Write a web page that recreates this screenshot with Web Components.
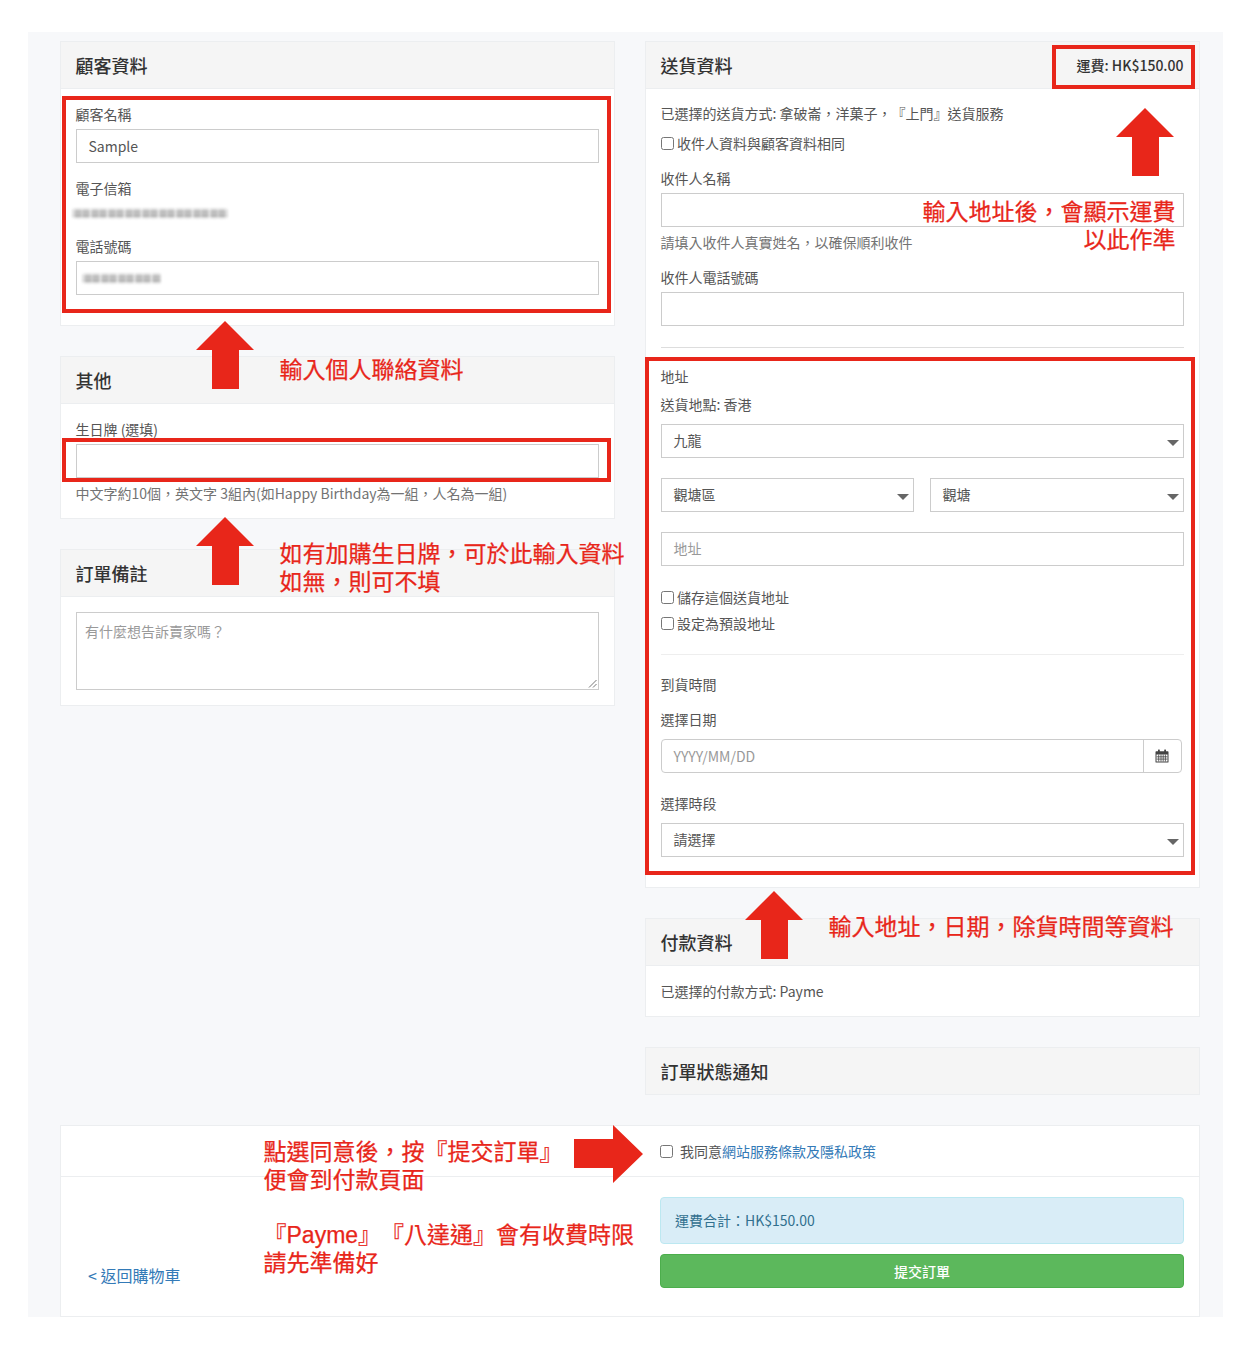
<!DOCTYPE html>
<html lang="zh-Hant">
<head>
<meta charset="utf-8">
<title>結帳</title>
<style>
  html, body { margin: 0; background: #fff; }
  body { font: 14px/20px "Noto Sans CJK TC", "Noto Sans", sans-serif; color: #555; padding: 32px 27px 0 28px; height: 1318px; box-sizing: border-box; overflow: hidden; text-spacing-trim: space-all; }
  .mt4{margin-top:4px}.mt6{margin-top:6px}.mt8{margin-top:8px}.mt9{margin-top:9px}.mt10{margin-top:10px}.mt14{margin-top:14px}.mt15{margin-top:15px}.mt16{margin-top:16px}.mt19{margin-top:19px}.mt20{margin-top:20px}.mt21{margin-top:21px}.mt22{margin-top:22px}.mt30{margin-top:30px}
  .last15{margin-bottom:15px}
  .two{display:grid;grid-template-columns:253px 254px;column-gap:16px}
</style>
</head>
<body>
<checkout-page>
  <div slot="left">
    <x-panel heading="顧客資料">
      <x-label class="mt16">顧客名稱</x-label>
      <x-input class="mt4">Sample</x-input>
      <x-label class="mt16">電子信箱</x-label>
      <x-redacted class="mt4" width="156" shift="-4"></x-redacted>
      <x-label class="mt14">電話號碼</x-label>
      <x-input class="mt4"><x-redacted width="79" shift="-7"></x-redacted></x-input>
      <div class="last15"></div>
    </x-panel>
    <x-panel heading="其他" class="mt30" style="--pb:14px">
      <x-label class="mt16">生日牌 (選填)</x-label>
      <x-input class="mt4"></x-input>
      <x-hint class="mt6">中文字約10個，英文字 3組內(如Happy Birthday為一組，人名為一組)</x-hint>
    </x-panel>
    <x-panel heading="訂單備註" class="mt30">
      <x-textarea class="mt15">有什麼想告訴賣家嗎？</x-textarea>
    </x-panel>
  </div>
  <div slot="right">
    <x-panel heading="送貨資料">
      <x-label slot="extra" strong>運費: HK$150.00</x-label>
      <x-label class="mt15">已選擇的送貨方式: 拿破崙，洋菓子，『上門』送貨服務</x-label>
      <x-check class="mt10">收件人資料與顧客資料相同</x-check>
      <x-label class="mt15">收件人名稱</x-label>
      <x-input class="mt4"></x-input>
      <x-hint class="mt6">請填入收件人真實姓名，以確保順利收件</x-hint>
      <x-label class="mt15">收件人電話號碼</x-label>
      <x-input class="mt4"></x-input>
      <x-rule class="mt21" tone="#ddd"></x-rule>
      <x-label class="mt19">地址</x-label>
      <x-label class="mt8">送貨地點: 香港</x-label>
      <x-select class="mt9">九龍</x-select>
      <div class="two mt20">
        <x-select>觀塘區</x-select>
        <x-select>觀塘</x-select>
      </div>
      <x-input class="mt20" placeholder>地址</x-input>
      <x-check class="mt22">儲存這個送貨地址</x-check>
      <x-check class="mt6">設定為預設地址</x-check>
      <x-rule class="mt20" tone="#eee"></x-rule>
      <x-label class="mt20">到貨時間</x-label>
      <x-label class="mt15">選擇日期</x-label>
      <x-date class="mt9">YYYY/MM/DD</x-date>
      <x-label class="mt21">選擇時段</x-label>
      <x-select class="mt9">請選擇</x-select>
      <div class="last15"></div>
    </x-panel>
    <x-panel heading="付款資料" class="mt30" style="--pb:14px">
      <x-label class="mt16">已選擇的付款方式: Payme</x-label>
    </x-panel>
    <x-panel heading="訂單狀態通知" class="mt30" bare></x-panel>
  </div>
  <x-submit slot="bottom"></x-submit>
</checkout-page>

<x-frame style="left:62px;top:96px;width:549px;height:217px"></x-frame>
<x-frame style="left:62px;top:438px;width:549px;height:44px"></x-frame>
<x-frame style="left:1052px;top:45px;width:143px;height:44px"></x-frame>
<x-frame style="left:645px;top:357px;width:550px;height:518px"></x-frame>

<x-arrow style="left:196px;top:321px"></x-arrow>
<x-arrow style="left:196px;top:517px"></x-arrow>
<x-arrow style="left:1116px;top:108px"></x-arrow>
<x-arrow style="left:745px;top:891px"></x-arrow>
<x-arrow dir="right" style="left:574px;top:1125px"></x-arrow>

<x-note style="left:279.500px;top:356px">輸入個人聯絡資料</x-note>
<x-note style="left:279.500px;top:540px">如有加購生日牌，可於此輸入資料<br>如無，則可不填</x-note>
<x-note style="right:74.500px;top:198px;text-align:right">輸入地址後，會顯示運費<br>以此作準</x-note>
<x-note style="left:828.500px;top:913px">輸入地址，日期，除貨時間等資料</x-note>
<x-note style="left:263.500px;top:1138px">點選同意後，按『提交訂單』<br>便會到付款頁面</x-note>
<x-note style="left:263.500px;top:1221px">『Payme』『八達通』會有收費時限<br>請先準備好</x-note>

<script>
function def(name, css, html, init) {
  customElements.define(name, class extends HTMLElement {
    constructor() {
      super();
      const r = this.attachShadow({ mode: 'open' });
      r.innerHTML = '<style>' + css + '</style>' + html;
    }
    connectedCallback() { if (init) init(this, this.shadowRoot); }
  });
}
const box = 'box-sizing:border-box;background:#fff;border:1px solid #ccc;';

def('checkout-page',
  `:host{display:block;background:#f7f8fa;height:1285px;overflow:hidden;padding:9px 23px 0 32px;box-sizing:border-box}
   .cols{display:grid;grid-template-columns:555px 555px;column-gap:30px;height:1084px}`,
  `<div class="cols"><slot name="left"></slot><slot name="right"></slot></div><slot name="bottom"></slot>`);

def('x-panel',
  `:host{display:block;background:#fff;border:1px solid #eceef0;box-sizing:border-box}
   header{height:46px;background:#f5f5f5;border-bottom:1px solid #eceef0;display:flex;align-items:center;justify-content:space-between;padding:0 14.5px;box-sizing:content-box}
   h3{margin:0;font:500 18px/24px "Noto Sans CJK TC",sans-serif;color:#333}
   .extra{font-weight:500;color:#333;padding-right:1px}
   main{padding:0 15px var(--pb,15px);display:flow-root}
   :host([bare]) main{display:none}
   :host([bare]) header{border-bottom:0;height:46px}`,
  `<header><h3></h3><div class="extra"><slot name="extra"></slot></div></header><main><slot></slot></main>`,
  (h, r) => { r.querySelector('h3').textContent = h.getAttribute('heading'); });

def('x-label',
  `:host{display:block;height:20px;line-height:18px;color:#555;white-space:nowrap;margin-left:-.5px}
   :host([strong]){color:#333;font-weight:500;line-height:20px;margin-left:0}`, `<slot></slot>`);

def('x-hint', `:host{display:block;height:20px;line-height:18px;color:#737373;white-space:nowrap;margin-left:-.5px}`, `<slot></slot>`);

def('x-input',
  `:host{display:flex;align-items:center;height:34px;${box}padding:0 11.5px;color:#555;white-space:nowrap}
   :host([placeholder]){color:#999;padding-bottom:2px}`, `<slot></slot>`);

def('x-redacted',
  `:host{display:block;height:20px;width:100%;position:relative}
   i{position:absolute;top:5px;height:11px;background:repeating-linear-gradient(90deg,rgba(255,255,255,.5) 0 3px,rgba(255,255,255,0) 3px 9px,rgba(255,255,255,.3) 9px 11px,rgba(255,255,255,0) 11px 17px),linear-gradient(180deg,#eee 0,#cfcfcf 18%,#a8a8a8 38%,#c8c8c8 52%,#a0a0a0 68%,#dcdcdc 88%,#f3f3f3 100%);filter:blur(1px);opacity:.9}`,
  `<i></i>`,
  (h, r) => { const i = r.querySelector('i'); i.style.width = h.getAttribute('width') + 'px'; i.style.left = h.getAttribute('shift') + 'px'; });

def('x-textarea',
  `:host{display:block;position:relative;height:78px;${box}padding:8px 8px;color:#999;line-height:20px}
   svg{position:absolute;right:1px;bottom:1px}`,
  `<slot></slot><svg width="9" height="9" viewBox="0 0 9 9"><path d="M1 8.500 8.500 1M5 8.500 8.500 5" stroke="#777" fill="none"/></svg>`);

def('x-select',
  `:host{display:flex;align-items:center;position:relative;height:34px;${box}padding:0 11.5px 2px;color:#555;white-space:nowrap}
   svg{position:absolute;right:4px;top:15px}`,
  `<slot></slot><svg width="12" height="6" viewBox="0 0 12 6"><path d="M0 0h12L6 6z" fill="#666"/></svg>`);

def('x-check',
  `:host{display:flex;align-items:center;height:20px;color:#555;white-space:nowrap}
   input{margin:0 3px 2px 0;width:13px;height:13px}
   span{line-height:18px;height:20px}`,
  `<input type="checkbox"><span><slot></slot></span>`);

def('x-rule', `:host{display:block;height:1px}`, ``, (h) => { h.style.background = h.getAttribute('tone'); });

def('x-date',
  `:host{display:flex;height:34px;width:521px;box-sizing:border-box;border:1px solid #ccc;border-radius:4px;background:#fff;color:#999}
   .v{flex:1;display:flex;align-items:center;padding:0 11.5px}
   .a{width:38px;box-sizing:border-box;padding-right:2px;border-left:1px solid #ccc;display:flex;align-items:center;justify-content:center}`,
  `<div class="v"><slot></slot></div><div class="a"><svg width="14" height="14" viewBox="0 0 14 14"><path d="M1.200 2.200h11.600a.7.7 0 0 1 .7.7v10a.7.7 0 0 1-.7.7H1.200a.7.7 0 0 1-.7-.7v-10a.7.7 0 0 1 .7-.7z" fill="#444"/><rect x="3" y=".5" width="1.800" height="3" rx=".5" fill="#444"/><rect x="9.200" y=".5" width="1.800" height="3" rx=".5" fill="#444"/><path d="M1.500 5.500h11v7h-11z" fill="#fff"/><path d="M3.700 5.500v7M6 5.500v7M8.200 5.500v7M10.400 5.500v7M1.500 7.800h11M1.500 10.100h11" stroke="#444" stroke-width=".8"/></svg></div>`);

def('x-submit',
  `:host{display:block;width:1140px;height:192px;background:#fff;border:1px solid #eceef0;box-sizing:border-box}
   .agree{height:50px;border-bottom:1px solid #eceef0;padding-left:599px;display:flex;align-items:center;color:#555;white-space:nowrap;box-sizing:content-box}
   input{margin:0 7px 0 0;width:13px;height:13px}
   a{color:#337ab7;text-decoration:none}
   .row{display:grid;grid-template-columns:599px 524px}
   .back{padding:88px 0 0 27px;font-size:16px;line-height:20px;white-space:nowrap}
   .alert{margin-top:20px;height:47px;box-sizing:border-box;background:#d9edf7;border:1px solid #bce8f1;border-radius:4px;color:#31708f;display:flex;align-items:center;padding:0 14px 1px}
   .btn{margin-top:10px;height:34px;box-sizing:border-box;background:#5cb85c;border:1px solid #4cae4c;border-radius:4px;color:#fff;font-weight:500;display:flex;align-items:center;justify-content:center}`,
  `<div class="agree"><input type="checkbox"><span>我同意<a href="#">網站服務條款及隱私政策</a></span></div>
   <div class="row"><div class="back"><a href="#">&lt; 返回購物車</a></div>
   <div><div class="alert">運費合計：HK$150.00</div><div class="btn">提交訂單</div></div></div>`);

def('x-frame', `:host{position:absolute;box-sizing:border-box;border:4px solid #e8261a;pointer-events:none}`, ``);

def('x-note',
  `:host{position:absolute;font:400 23px/28px "Liberation Sans","Noto Sans CJK TC",sans-serif;-webkit-text-stroke:.25px #e8261a;color:#e8261a;white-space:nowrap}`,
  `<slot></slot>`);

def('x-arrow', `:host{position:absolute;display:block;line-height:0}`, ``, (h, r) => {
  const right = h.getAttribute('dir') === 'right';
  r.innerHTML += right
    ? `<svg width="69" height="58" viewBox="0 0 69 58"><path d="M0 14h39V0l30 29-30 29V43H0z" fill="#e8261a"/></svg>`
    : `<svg width="58" height="68" viewBox="0 0 58 68"><path d="M29 0l29 29H43v39H16V29H0z" fill="#e8261a"/></svg>`;
});
</script>
</body>
</html>
